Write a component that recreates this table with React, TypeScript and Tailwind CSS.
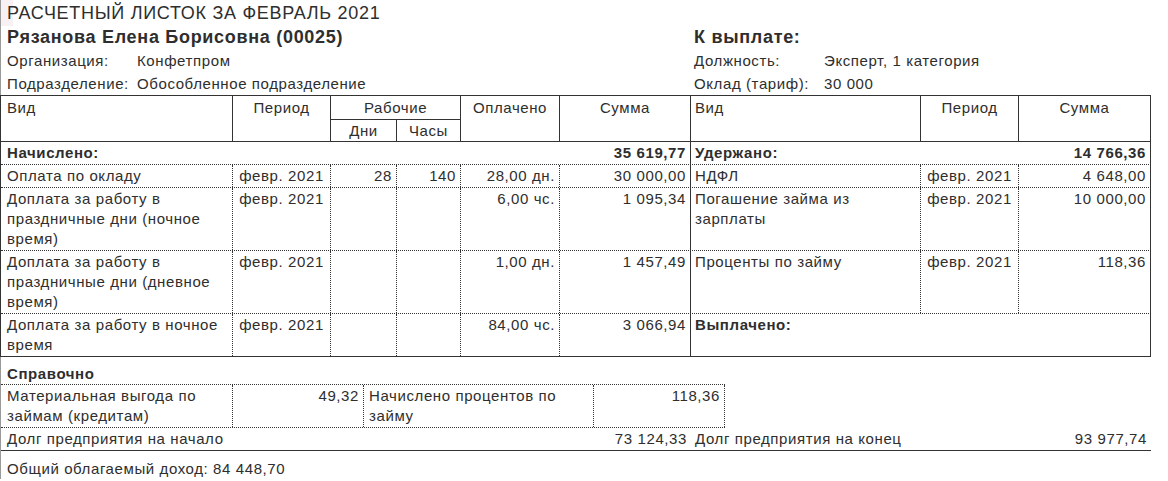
import { ReactNode } from "react";

// column grid shared by the header and every body row (widths include the right border)
const COLS = "grid grid-cols-[232px_98px_66px_64px_99px_131px_230px_98px_132px]";

type Line = {
  name: ReactNode;
  period: string;
  days?: string;
  hours?: string;
  paid: string;
  sum: string;
};

type Deduction = { name: ReactNode; period: string; sum: string } | null;

const accruals: Line[] = [
  { name: "Оплата по окладу", period: "февр. 2021", days: "28", hours: "140", paid: "28,00 дн.", sum: "30 000,00" },
  {
    name: (
      <>
        Доплата за работу в<br />праздничные дни (ночное<br />время)
      </>
    ),
    period: "февр. 2021",
    paid: "6,00 чс.",
    sum: "1 095,34"
  },
  {
    name: (
      <>
        Доплата за работу в<br />праздничные дни (дневное<br />время)
      </>
    ),
    period: "февр. 2021",
    paid: "1,00 дн.",
    sum: "1 457,49"
  },
  {
    name: (
      <>
        Доплата за работу в ночное<br />время
      </>
    ),
    period: "февр. 2021",
    paid: "84,00 чс.",
    sum: "3 066,94"
  }
];

const deductions: Deduction[] = [
  { name: "НДФЛ", period: "февр. 2021", sum: "4 648,00" },
  {
    name: (
      <>
        Погашение займа из<br />зарплаты
      </>
    ),
    period: "февр. 2021",
    sum: "10 000,00"
  },
  { name: "Проценты по займу", period: "февр. 2021", sum: "118,36" },
  null
];

export default function App() {
  return (
    <div className="min-h-screen bg-white font-['Liberation_Sans',Arial,sans-serif] text-[15px] leading-[20px] tracking-[0.6px] text-[#2e2e2e]">
      <div className="w-[1151px]">
        <TopInfo />
        <MainTable />
        <Reference />
      </div>
    </div>
  );
}

function InfoLine({ label, value }: { label: string; value: string }) {
  return (
    <div className="flex h-[23px] items-center whitespace-nowrap">
      <span className="w-[130px]">{label}</span>
      <span>{value}</span>
    </div>
  );
}

function TopInfo() {
  return (
    <div className="border-l border-[#9a9a9a]">
      <div className="relative h-[26px] whitespace-nowrap pl-[6px] text-[18px] leading-[26px] tracking-[0.7px]">
        <div className="absolute left-0 top-0 h-[26px] w-[12px] bg-[#f7f1f4]" />
        <span className="relative">РАСЧЕТНЫЙ ЛИСТОК ЗА ФЕВРАЛЬ 2021</span>
      </div>
      <div className="grid grid-cols-[689px_1fr]">
        <div className="pl-[6px]">
          <div className="h-[23px] whitespace-nowrap text-[18px] font-bold leading-[23px] tracking-[0.7px]">Рязанова Елена Борисовна (00025)</div>
          <InfoLine label="Организация:" value="Конфетпром" />
          <InfoLine label="Подразделение:" value="Обособленное подразделение" />
        </div>
        <div className="pl-[4px]">
          <div className="h-[23px] whitespace-nowrap text-[18px] font-bold leading-[23px] tracking-[0.7px]">К выплате:</div>
          <InfoLine label="Должность:" value="Эксперт, 1 категория" />
          <InfoLine label="Оклад (тариф):" value="30 000" />
        </div>
      </div>
    </div>
  );
}

const head = "border-r border-b border-[#333] px-[4px]";
const dot = "border-r border-dotted border-[#333] px-[4px] py-px whitespace-nowrap";
const solid = "border-r border-[#333] px-[4px] py-px whitespace-nowrap";

function MainTable() {
  return (
    <div className="border-l border-[#333]">
      <div className={`${COLS} grid-rows-[24px_22px] border-t border-[#333]`}>
        <div className={`${head} row-span-2 pl-[6px] pt-[2px]`}>Вид</div>
        <div className={`${head} row-span-2 pt-[2px] text-center`}>Период</div>
        <div className={`${head} col-span-2 pt-[2px] text-center`}>Рабочие</div>
        <div className={`${head} row-span-2 pt-[2px] text-center`}>Оплачено</div>
        <div className={`${head} row-span-2 pt-[2px] text-center`}>Сумма</div>
        <div className={`${head} row-span-2 pt-[2px]`}>Вид</div>
        <div className={`${head} row-span-2 pt-[2px] text-center`}>Период</div>
        <div className={`${head} row-span-2 pt-[2px] text-center`}>Сумма</div>
        <div className={`${head} col-start-3 row-start-2 pt-px text-center`}>Дни</div>
        <div className={`${head} col-start-4 row-start-2 pt-px text-center`}>Часы</div>
      </div>

      <div className={`${COLS} border-b border-dotted border-[#333] font-bold`}>
        <div className={`${solid} col-span-6 flex justify-between pl-[6px]`}>
          <span>Начислено:</span>
          <span>35 619,77</span>
        </div>
        <div className={`${solid} col-span-3 flex justify-between`}>
          <span>Удержано:</span>
          <span>14 766,36</span>
        </div>
      </div>

      {accruals.map((line, i) => {
        const d = deductions[i];
        const last = i === accruals.length - 1;
        return (
          <div key={i} className={`${COLS} border-b border-[#333] ${last ? "border-solid" : "border-dotted"}`}>
            <div className={`${dot} pl-[6px]`}>{line.name}</div>
            <div className={`${dot} text-center`}>{line.period}</div>
            <div className={`${dot} text-right`}>{line.days}</div>
            <div className={`${dot} text-right`}>{line.hours}</div>
            <div className={`${dot} text-right`}>{line.paid}</div>
            <div className={`${solid} text-right`}>{line.sum}</div>
            {d ? (
              <>
                <div className={dot}>{d.name}</div>
                <div className={`${dot} text-center`}>{d.period}</div>
                <div className={`${solid} text-right`}>{d.sum}</div>
              </>
            ) : (
              <div className={`${solid} col-span-3 font-bold`}>Выплачено:</div>
            )}
          </div>
        );
      })}
    </div>
  );
}

function Reference() {
  return (
    <div className="border-l border-[#9a9a9a]">
      <div className="h-[27px] pl-[6px] pt-[7px] font-bold">Справочно</div>
      <div className="grid w-[724px] grid-cols-[232px_131px_230px_131px] border-y border-dotted border-[#333]">
        <div className={`${dot} pl-[6px]`}>
          Материальная выгода по<br />займам (кредитам)
        </div>
        <div className={`${dot} text-right`}>49,32</div>
        <div className={`${dot} pl-[5px]`}>
          Начислено процентов по<br />займу
        </div>
        <div className={`${dot} text-right`}>118,36</div>
      </div>
      <div className="grid w-[1150px] grid-cols-[690px_460px] border-b border-[#333]">
        <div className="flex justify-between py-px pl-[6px] pr-[4px]">
          <span>Долг предприятия на начало</span>
          <span>73 124,33</span>
        </div>
        <div className="flex justify-between py-px pl-[4px] pr-[4px]">
          <span>Долг предприятия на конец</span>
          <span>93 977,74</span>
        </div>
      </div>
      <div className="pl-[6px] pt-[8px]">Общий облагаемый доход: 84 448,70</div>
    </div>
  );
}
